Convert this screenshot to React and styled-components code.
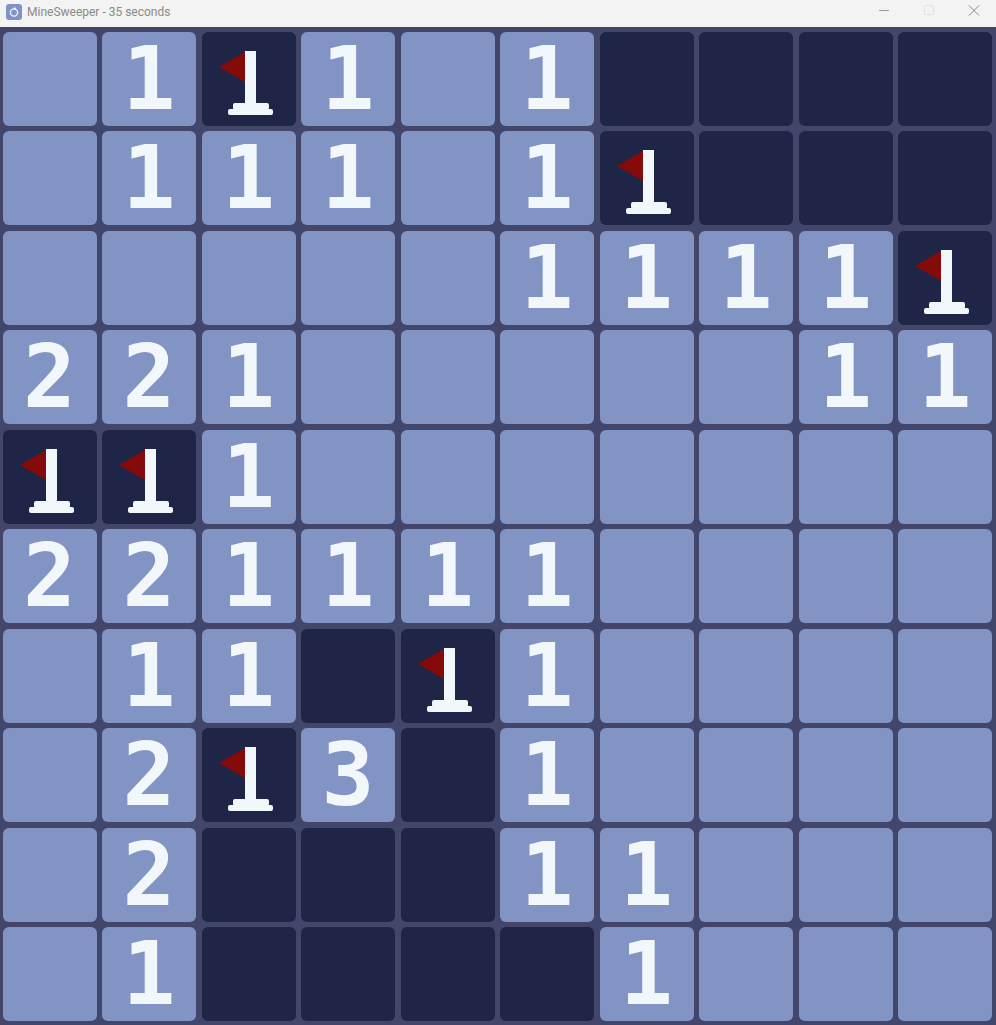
import React from 'react';
import styled, { createGlobalStyle } from 'styled-components';

const GlobalStyle = createGlobalStyle`
    html, body {
        margin: 0;
        padding: 0;
        background: #42466a;
    }
`;

const Window = styled.div`
    width: 996px;
    height: 1025px;
    overflow: hidden;
    display: flex;
    flex-direction: column;
    background: #42466a;
`;

const TitleBar = styled.div`
    height: 27px;
    flex: none;
    display: flex;
    align-items: center;
    background: #f3f3f3;
    padding-left: 6px;
`;

const AppIcon = styled.svg`
    width: 16px;
    height: 16px;
    margin-top: -3px;
    flex: none;
`;

const Title = styled.div`
    margin-left: 5px;
    margin-top: -3px;
    font-family: Roboto, "Noto Sans", sans-serif;
    font-size: 12px;
    color: #8a8a8a;
    white-space: nowrap;
`;

const Controls = styled.div`
    margin-left: auto;
    display: flex;
    height: 100%;
`;

const ControlButton = styled.div`
    width: 45px;
    height: 100%;
    display: flex;
    align-items: flex-start;
    justify-content: center;
    padding-top: 5px;
    box-sizing: border-box;
`;

const Board = styled.div`
    display: grid;
    grid-template-columns: repeat(10, 94px);
    grid-auto-rows: 94px;
    gap: 5.5px;
    padding: 4.5px 0 0 2.5px;
`;

const Cell = styled.div`
    border-radius: 6px;
    background: ${(p) => (p.$covered ? '#1e2547' : '#8294c4')};
    display: flex;
    align-items: center;
    justify-content: center;
`;

const Digit = styled.span`
    font-family: "DejaVu Sans Mono", "Liberation Mono", monospace;
    font-weight: 700;
    font-size: 88px;
    line-height: 90px;
    color: #f2f7fb;
    user-select: none;
`;

const FlagIcon = styled.svg`
    width: 94px;
    height: 94px;
    display: block;
    align-self: flex-start;
`;

const Flag = () => (
    <FlagIcon viewBox="0 0 94 94">
        <polygon points="17,35 43,20 43,50" fill="#850b0b" />
        <rect x="43" y="19" width="11" height="54" fill="#f2f7fb" />
        <rect x="31" y="71" width="36" height="7" rx="2" fill="#f2f7fb" />
        <rect x="26" y="77" width="45" height="6" rx="2" fill="#f2f7fb" />
    </FlagIcon>
);

// _ open, D covered, F flagged, digits as shown
const rows = [
    '_1F1_1DDDD',
    '_111_1FDDD',
    '_____1111F',
    '221_____11',
    'FF1_______',
    '221111____',
    '_11DF1____',
    '_2F3D1____',
    '_2DDD11___',
    '_1DDDD1___',
];

const BoardCell = ({ value }) => {
    if (value === 'F') return <Cell $covered><Flag /></Cell>;
    if (value === 'D') return <Cell $covered />;
    if (value === '_') return <Cell />;
    return <Cell><Digit>{value}</Digit></Cell>;
};

const App = () => {
    return (
        <Window>
            <GlobalStyle />
            <TitleBar>
                <AppIcon viewBox="0 0 16 16">
                    <rect width="16" height="16" rx="3" fill="#8093c8" />
                    <circle cx="8" cy="8.5" r="3.6" fill="none" stroke="#f3f5fb" strokeWidth="1.3" />
                    <rect x="8" y="3.6" width="2" height="2" fill="#f3f5fb" />
                </AppIcon>
                <Title>MineSweeper - 35 seconds</Title>
                <Controls>
                    <ControlButton>
                        <svg width="12" height="12" viewBox="0 0 12 12">
                            <rect x="1" y="5" width="10" height="1" fill="#9a9a9a" />
                        </svg>
                    </ControlButton>
                    <ControlButton>
                        <svg width="12" height="12" viewBox="0 0 12 12">
                            <rect x="1.5" y="0.5" width="9" height="9" rx="1" fill="none" stroke="#e2e2e2" />
                        </svg>
                    </ControlButton>
                    <ControlButton>
                        <svg width="12" height="12" viewBox="0 0 12 12">
                            <path d="M1 0.5 L11 10.5 M11 0.5 L1 10.5" stroke="#8a8a8a" strokeWidth="1" fill="none" />
                        </svg>
                    </ControlButton>
                </Controls>
            </TitleBar>
            <Board>
                {rows.map((row, r) =>
                    row.split('').map((value, c) => <BoardCell key={`${r}-${c}`} value={value} />)
                )}
            </Board>
        </Window>
    );
};

export default App;
